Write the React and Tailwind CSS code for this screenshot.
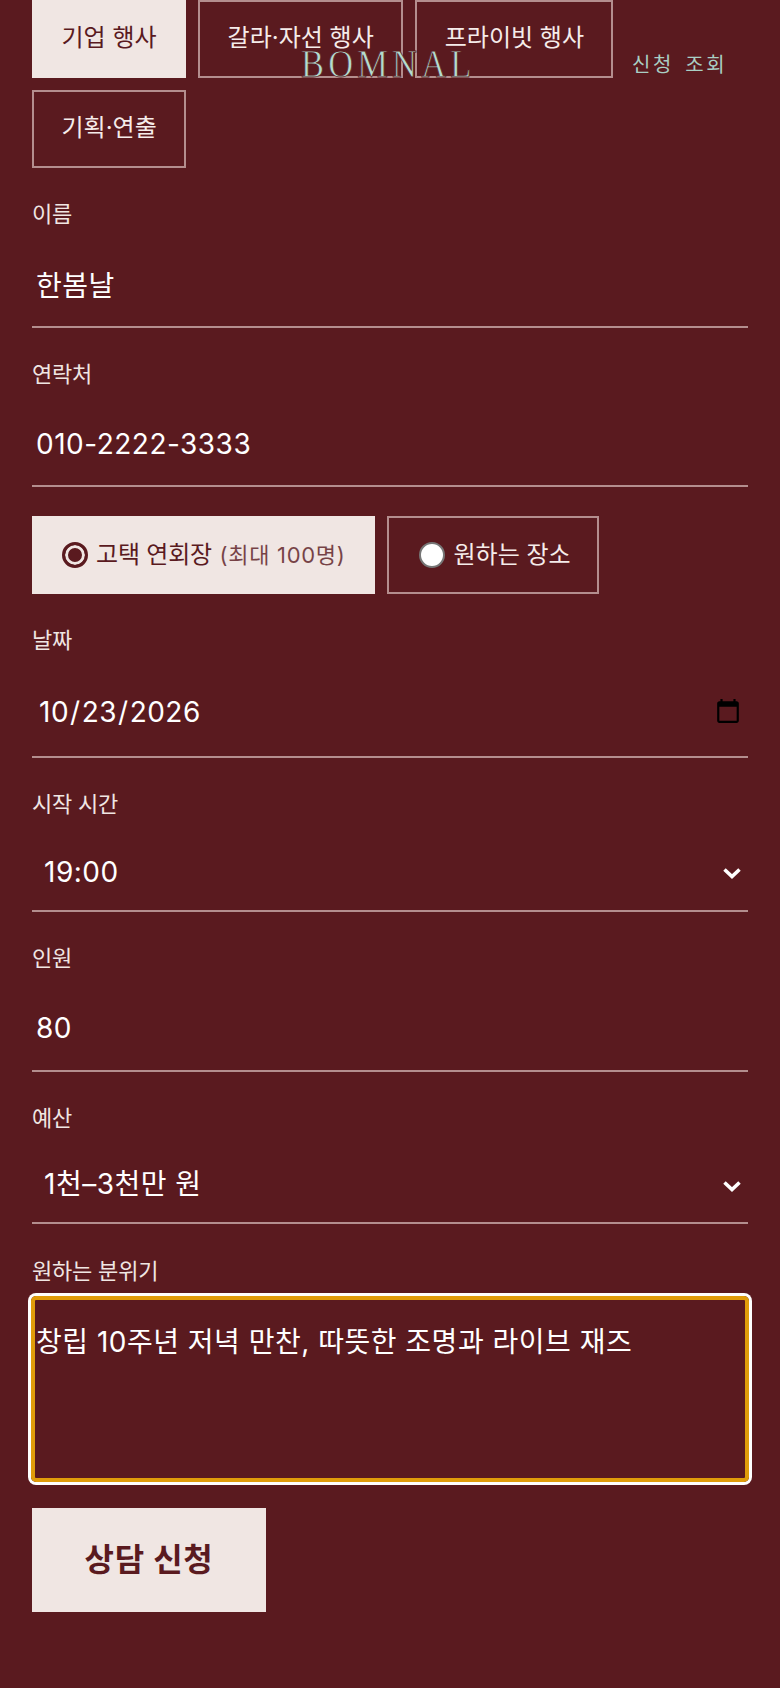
import React from 'react';

const font = "font-['Inter','Noto_Sans_CJK_KR',sans-serif]";

function Tab({ active, children }) {
  return (
    <button
      type="button"
      className={
        active
          ? 'h-[78px] border-2 border-[#f0e6e3] bg-[#f0e6e3] px-[27.5px] pb-[2px] text-[24px] text-[#5a1a1f]'
          : 'h-[78px] border-2 border-[#b48e8e] px-[27.5px] pb-[2px] text-[24px] text-[#f5ecea]'
      }
    >
      {children}
    </button>
  );
}

function Label({ children }) {
  return <label className="block text-[22px] leading-[32px] tracking-[-0.2px] text-[#f0e6e3]">{children}</label>;
}

function Chevron() {
  return (
    <svg
      className="pointer-events-none absolute right-[7px] top-[50%] h-[12px] w-[18px]"
      viewBox="0 0 18 12"
      fill="none"
      stroke="#ffffff"
      strokeWidth="3.6"
    >
      <path d="M1.5 2.5 9 9.5l7.5-7" />
    </svg>
  );
}

const fieldClass =
  'block w-full border-b-2 border-[#b48e8e] bg-transparent px-1 text-[28px] tracking-[0.5px] text-white outline-none';

export default function App() {
  return (
    <div className={`relative min-h-[1688px] overflow-hidden bg-[#5a1a1f] px-8 ${font}`}>
      {/* fixed header over the scrolled form */}
      <div className="absolute left-0 right-0 top-0 z-10 h-[78px]">
        <span className="absolute left-[301px] top-[40px] origin-left scale-x-[0.84] font-['Liberation_Serif',serif] text-[41px] leading-[46px] tracking-[5px] text-[#b4dccf] [-webkit-text-stroke:0.8px_#5a1a1f]">
          BOMNAL
        </span>
        <span className="absolute left-[632px] top-[50px] text-[20px] leading-[30px] tracking-[2.6px] text-[#a9cfc4] [word-spacing:3px]">
          신청 조회
        </span>
      </div>

      <div className="flex flex-wrap gap-3 pr-[130px]">
        <Tab active>기업 행사</Tab>
        <Tab>갈라·자선 행사</Tab>
        <Tab>프라이빗 행사</Tab>
        <Tab>기획·연출</Tab>
      </div>

      <div className="mt-[30px]">
        <Label>이름</Label>
        <input type="text" defaultValue="한봄날" className={`${fieldClass} mt-[2px] h-[96px] pt-[10px]`} />
      </div>

      <div className="mt-[30px]">
        <Label>연락처</Label>
        <input type="tel" defaultValue="010-2222-3333" className={`${fieldClass} mt-[2px] h-[95px] pt-[10px]`} />
      </div>

      <div className="mt-[29px] flex gap-3">
        <label className="flex h-[78px] items-center gap-[8px] border-2 border-[#f0e6e3] bg-[#f0e6e3] pl-[28px] pr-[28px] text-[24px] text-[#5a1a1f]">
          <input
            type="radio"
            name="venue"
            defaultChecked
            className="m-0 h-[26px] w-[26px] appearance-none rounded-full border-[3px] border-[#5a1a1f] bg-[#5a1a1f] shadow-[inset_0_0_0_3px_#f0e6e3]"
          />
          <span className="tracking-[-0.2px]">
            고택 연회장{' '}
            <span className="ml-[1px] text-[22px] tracking-[0.7px] opacity-80">(최대 100명)</span>
          </span>
        </label>
        <label className="flex h-[78px] items-center gap-[8px] border-2 border-[#b48e8e] pl-[30px] pr-[26px] text-[24px] text-[#f5ecea]">
          <input
            type="radio"
            name="venue"
            className="m-0 h-[26px] w-[26px] appearance-none rounded-full border-2 border-[#767676] bg-white"
          />
          <span>원하는 장소</span>
        </label>
      </div>

      <div className="mt-[30px]">
        <Label>날짜</Label>
        <input type="date" defaultValue="2026-10-23" className={`${fieldClass} mt-[2px] h-[100px] pl-[6px] pt-[10px]`} />
      </div>

      <div className="mt-[30px]">
        <Label>시작 시간</Label>
        <div className="relative mt-[2px]">
          <select defaultValue="19:00" className={`${fieldClass} h-[90px] appearance-none pl-3 pt-[12px]`}>
            <option className="text-black">19:00</option>
          </select>
          <Chevron />
        </div>
      </div>

      <div className="mt-[30px]">
        <Label>인원</Label>
        <input type="number" defaultValue="80" className={`${fieldClass} mt-[2px] h-[96px] pt-[10px]`} />
      </div>

      <div className="mt-[30px]">
        <Label>예산</Label>
        <div className="relative mt-[2px]">
          <select defaultValue="1천–3천만 원" className={`${fieldClass} h-[88px] appearance-none pl-3 pt-[10px]`}>
            <option className="text-black">1천–3천만 원</option>
          </select>
          <Chevron />
        </div>
      </div>

      <div className="mt-[31px]">
        <Label>원하는 분위기</Label>
        <textarea
          defaultValue="창립 10주년 저녁 만찬, 따뜻한 조명과 라이브 재즈"
          className="mx-[-1px] mt-[9px] block h-[186px] w-[718px] resize-none rounded-[5px] border-4 border-[#e09c0a] bg-transparent px-[1px] pt-[22px] text-[28px] leading-[40px] tracking-[0.5px] text-white shadow-[0_0_0_3px_#ffffff] outline-none"
        />
      </div>

      <button
        type="button"
        className="mt-[26px] block h-[104px] w-[234px] bg-[#f0e6e3] text-[32px] font-bold tracking-[0.7px] text-[#5a1a1f]"
      >
        상담 신청
      </button>
    </div>
  );
}
